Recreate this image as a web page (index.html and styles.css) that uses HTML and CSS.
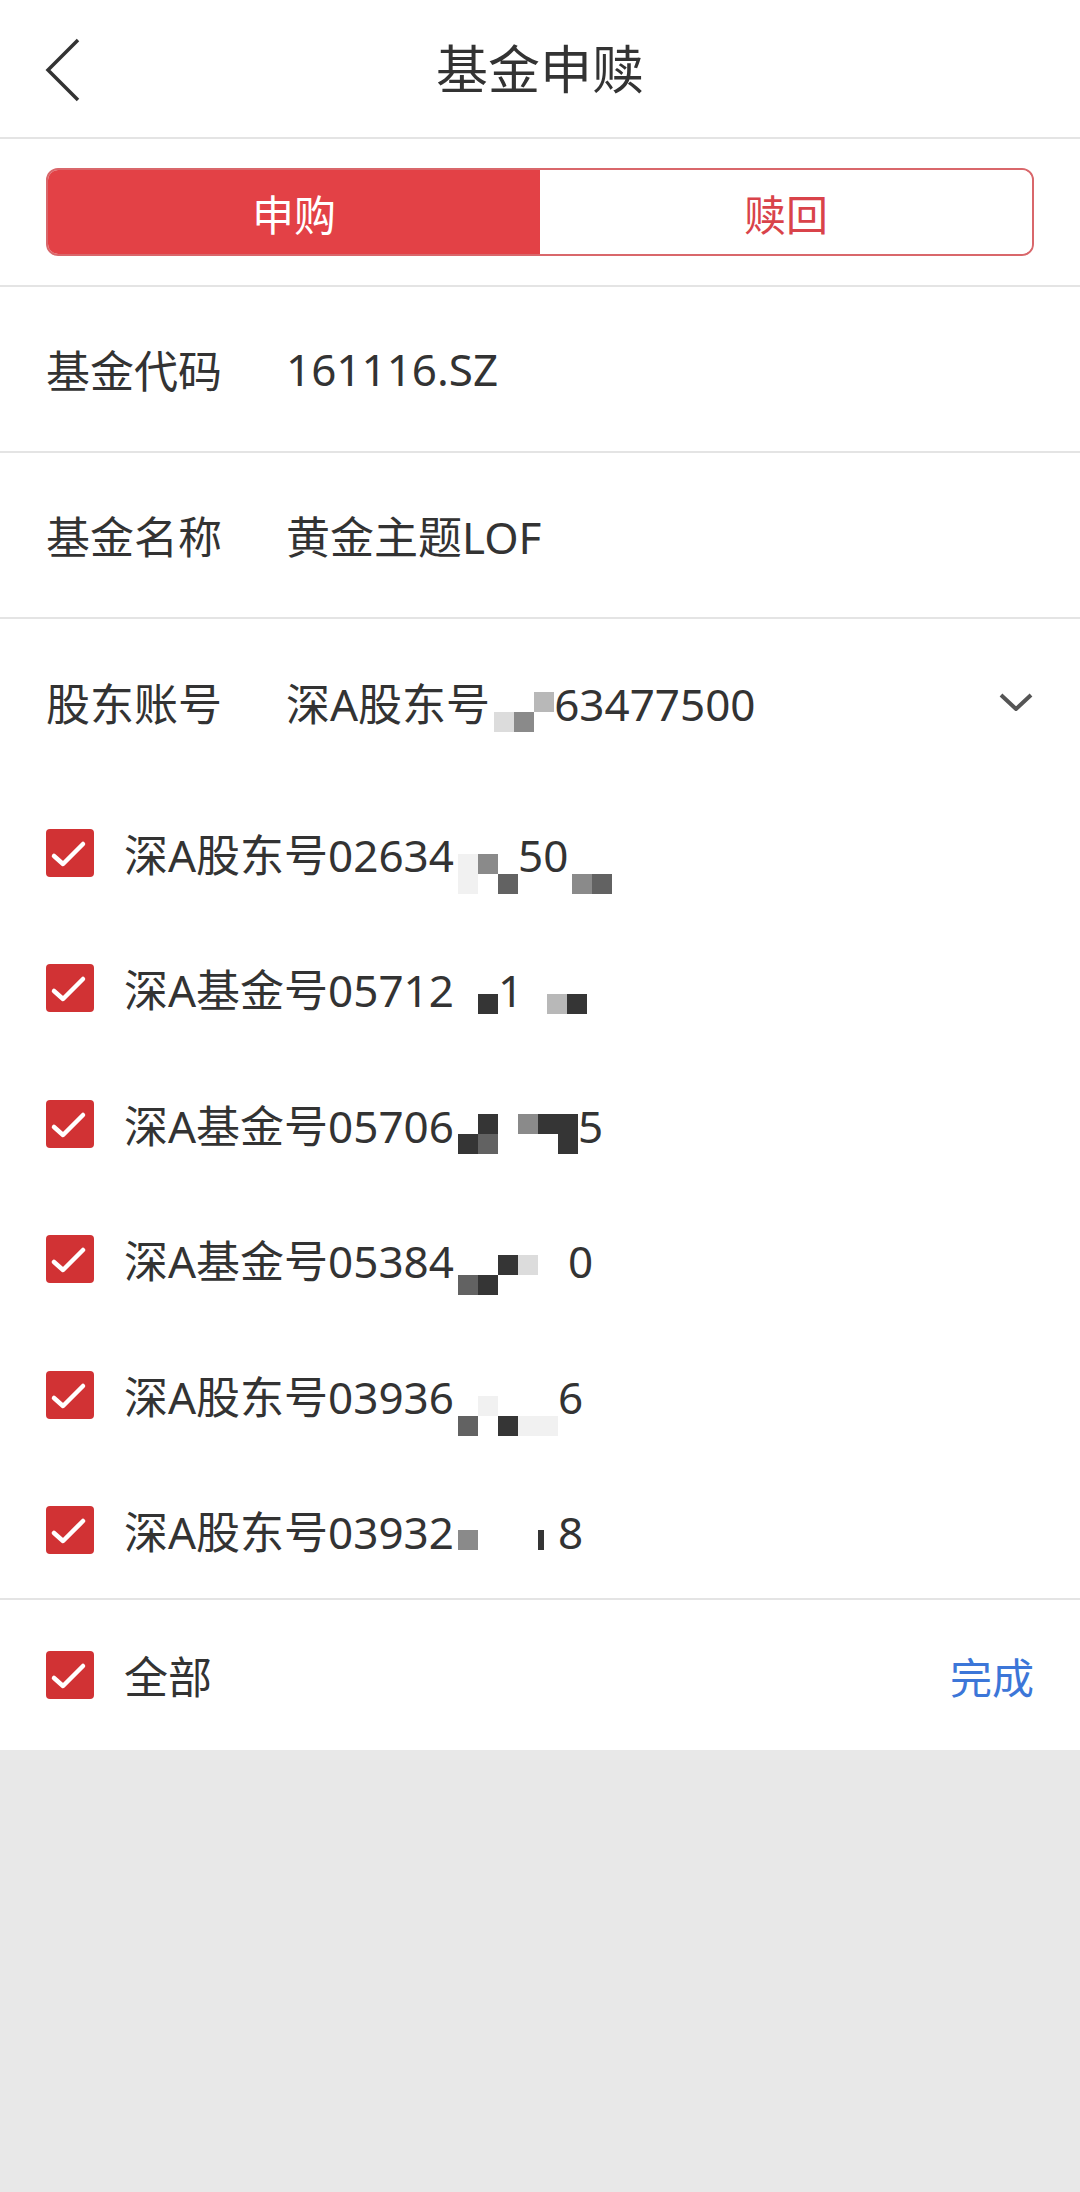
FILE: index.html
```html
<!DOCTYPE html>
<html lang="zh-CN">
<head>
  <meta charset="UTF-8">
  <meta name="viewport" content="width=device-width, initial-scale=1.0">
  <title>基金申赎</title>
  <link rel="stylesheet" href="styles.css">
</head>
<body>
  <div class="page">
    <!-- 顶部导航 -->
    <div class="nav">
      <div class="nav-back">
        <svg width="40" height="64" viewBox="0 0 40 64"><path d="M34 2 L4 32 L34 62" fill="none" stroke="#333" stroke-width="3.5" stroke-linejoin="miter"/></svg>
      </div>
      <div class="nav-title">基金申赎</div>
      <div></div>
    </div>

    <!-- 申购 / 赎回 切换 -->
    <div class="tabs-wrap">
      <div class="tabs">
        <div class="tab active">申购</div>
        <div class="tab">赎回</div>
      </div>
    </div>

    <div class="field">
      <span class="field-label">基金代码</span>
      <span class="field-value">161116.SZ</span>
    </div>
    <div class="field">
      <span class="field-label">基金名称</span>
      <span class="field-value">黄金主题LOF</span>
    </div>
    <div class="field no-line">
      <span class="field-label">股东账号</span>
      <span class="field-value">深A股东号<span class="mask cols-3 off-s"><i></i><i></i><i class="k3"></i><i class="k2"></i><i class="k4"></i><i></i></span>63477500</span>
      <svg class="arrow" width="34" height="18" viewBox="0 0 34 18"><path d="M2 2 L17 16 L32 2" fill="none" stroke="#555" stroke-width="4"/></svg>
    </div>

    <!-- 账号列表 -->
    <div class="accounts">
      <div class="account">
        <svg class="check" width="48" height="48" viewBox="0 0 48 48"><rect width="48" height="48" rx="4" fill="#d13234"/><path d="M8 27 L17 35 L37 15" fill="none" stroke="#fff" stroke-width="4.5" stroke-linecap="round" stroke-linejoin="round"/></svg>
        <span class="account-name">深A股东号02634<span class="mask cols-3 off-l"><i class="k1"></i><i class="k4"></i><i></i><i class="k1"></i><i></i><i class="k5"></i></span>50<span class="mask cols-2 off-l"><i></i><i></i><i class="k4"></i><i class="k5"></i></span></span>
      </div>
      <div class="account">
        <svg class="check" width="48" height="48" viewBox="0 0 48 48"><rect width="48" height="48" rx="4" fill="#d13234"/><path d="M8 27 L17 35 L37 15" fill="none" stroke="#fff" stroke-width="4.5" stroke-linecap="round" stroke-linejoin="round"/></svg>
        <span class="account-name">深A基金号05712<span class="mask cols-2 one off-m"><i></i><i class="k6"></i></span>1<span class="mask cols-2 one off-m gap"><i class="k3"></i><i class="k6"></i></span></span>
      </div>
      <div class="account">
        <svg class="check" width="48" height="48" viewBox="0 0 48 48"><rect width="48" height="48" rx="4" fill="#d13234"/><path d="M8 27 L17 35 L37 15" fill="none" stroke="#fff" stroke-width="4.5" stroke-linecap="round" stroke-linejoin="round"/></svg>
        <span class="account-name">深A基金号05706<span class="mask cols-6 off-s"><i></i><i class="k6"></i><i></i><i class="k4"></i><i class="k6"></i><i class="k6"></i><i class="k6"></i><i class="k5"></i><i></i><i></i><i></i><i class="k6"></i></span>5</span>
      </div>
      <div class="account">
        <svg class="check" width="48" height="48" viewBox="0 0 48 48"><rect width="48" height="48" rx="4" fill="#d13234"/><path d="M8 27 L17 35 L37 15" fill="none" stroke="#fff" stroke-width="4.5" stroke-linecap="round" stroke-linejoin="round"/></svg>
        <span class="account-name">深A基金号05384<span class="mask cols-4 off-m tail"><i></i><i></i><i class="k6"></i><i class="k2"></i><i class="k5"></i><i class="k6"></i><i></i><i></i></span>0</span>
      </div>
      <div class="account">
        <svg class="check" width="48" height="48" viewBox="0 0 48 48"><rect width="48" height="48" rx="4" fill="#d13234"/><path d="M8 27 L17 35 L37 15" fill="none" stroke="#fff" stroke-width="4.5" stroke-linecap="round" stroke-linejoin="round"/></svg>
        <span class="account-name">深A股东号03936<span class="mask cols-5 off-l"><i></i><i class="k1"></i><i></i><i></i><i></i><i class="k5"></i><i></i><i class="k6"></i><i class="k1"></i><i class="k1"></i></span>6</span>
      </div>
      <div class="account">
        <svg class="check" width="48" height="48" viewBox="0 0 48 48"><rect width="48" height="48" rx="4" fill="#d13234"/><path d="M8 27 L17 35 L37 15" fill="none" stroke="#fff" stroke-width="4.5" stroke-linecap="round" stroke-linejoin="round"/></svg>
        <span class="account-name">深A股东号03932<span class="mask cols-5 one off-s"><i class="k4"></i><i></i><i></i><i></i><i class="k6 thin"></i></span>8</span>
      </div>
    </div>

    <!-- 底部操作 -->
    <div class="footer">
      <div class="select-all">
        <svg class="check" width="48" height="48" viewBox="0 0 48 48"><rect width="48" height="48" rx="4" fill="#d13234"/><path d="M8 27 L17 35 L37 15" fill="none" stroke="#fff" stroke-width="4.5" stroke-linecap="round" stroke-linejoin="round"/></svg>
        <span class="account-name">全部</span>
      </div>
      <span class="done">完成</span>
    </div>
  </div>
</body>
</html>
```

FILE: styles.css
```css
body {
  margin: 0;
  font-family: "Noto Sans", "Noto Sans CJK SC", sans-serif;
  color: #333;
  background-color: #e8e8e8;
  min-height: 2192px;
}
.page {
  background: #fff;
}
.nav {
  height: 137px;
  display: grid;
  grid-template-columns: 1fr auto 1fr;
  align-items: center;
  border-bottom: 2px solid #e4e4e4;
}
.nav-back {
  padding-left: 44px;
  display: flex;
  align-items: center;
  padding-top: 2px;
}
.nav-title {
  font-size: 52px;
  line-height: 1;
}
.tabs-wrap {
  padding: 29px 46px 29px;
  border-bottom: 2px solid #e4e4e4;
}
.tabs {
  display: flex;
  height: 88px;
  border: 2px solid #d9676b;
  border-radius: 12px;
  overflow: hidden;
  box-sizing: border-box;
}
.tab {
  flex: 1;
  display: flex;
  align-items: center;
  justify-content: center;
  font-size: 42px;
  color: #d9434a;
  background: #fff;
}
.tab.active {
  background: #e34146;
  color: #fff;
}
.field {
  height: 164px;
  display: flex;
  align-items: center;
  padding: 0 46px;
  border-bottom: 2px solid #e4e4e4;
  font-size: 44px;
}
.field.no-line {
  border-bottom: none;
  height: 166px;
}
.field-label {
  width: 240px;
  flex-shrink: 0;
}
.field-value {
  flex: 1;
  white-space: nowrap;
}
.arrow {
  flex-shrink: 0;
  margin-right: 1px;
}
.accounts {
  border-bottom: 2px solid #e4e4e4;
}
.account {
  height: 135.5px;
  display: flex;
  align-items: center;
  padding: 0 46px;
}
.check {
  flex-shrink: 0;
  margin-right: 30px;
}
.account-name {
  font-size: 44px;
  white-space: nowrap;
}

/* 打码区块 */
.mask {
  display: inline-grid;
  grid-auto-rows: 20px;
  vertical-align: middle;
  position: relative;
  margin-left: 4px;
}
.mask.cols-2 { grid-template-columns: repeat(2, 20px); }
.mask.cols-3 { grid-template-columns: repeat(3, 20px); }
.mask.cols-4 { grid-template-columns: repeat(4, 20px); }
.mask.cols-5 { grid-template-columns: repeat(5, 20px); }
.mask.cols-6 { grid-template-columns: repeat(6, 20px); }
.mask.gap { margin-left: 24px; }
.mask.tail { margin-right: 30px; }
.off-s { top: 3px; }
.off-m { top: 9px; }
.off-l { top: 14px; }
.mask i { display: block; }
.mask i.thin { width: 6px; }
.k1 { background: #f1f1f1; }
.k2 { background: #dcdcdc; }
.k3 { background: #b8b8b8; }
.k4 { background: #8a8a8a; }
.k5 { background: #626262; }
.k6 { background: #353535; }

.footer {
  height: 150px;
  display: flex;
  align-items: center;
  justify-content: space-between;
  padding: 0 46px;
}
.select-all {
  display: flex;
  align-items: center;
}
.done {
  font-size: 42px;
  color: #3c76d8;
}
```
